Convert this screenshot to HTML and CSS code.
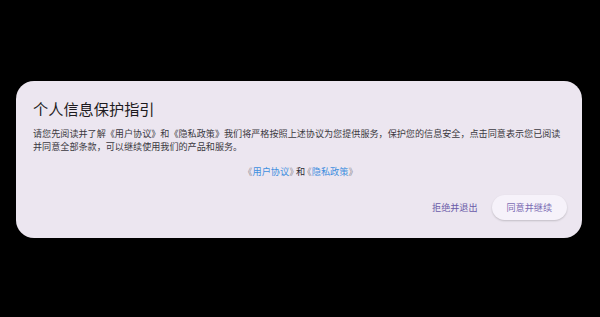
FILE: index.html
```html
<!DOCTYPE html>
<html lang="zh-CN">
<head>
<meta charset="utf-8">
<title>个人信息保护指引</title>
<link rel="stylesheet" href="styles.css">
</head>
<body>
<div class="dialog">
  <h1 class="title">个人信息保护指引</h1>
  <p class="desc">请您先阅读并了解《用户协议》和《隐私政策》我们将严格按照上述协议为您提供服务，保护您的信息安全，点击同意表示您已阅读并同意全部条款，可以继续使用我们的产品和服务。</p>
  <p class="links"><span class="br">《</span><a class="link">用户协议</a><span class="br">》</span> 和 <span class="br">《</span><a class="link">隐私政策</a><span class="br">》</span></p>
  <div class="actions">
    <button class="btn btn-text">拒绝并退出</button>
    <button class="btn btn-tonal">同意并继续</button>
  </div>
</div>
</body>
</html>
```

FILE: styles.css
```css
html, body {
  margin: 0;
  padding: 0;
  background: #000;
}
body {
  width: 600px;
  height: 317px;
  box-sizing: border-box;
  padding: 81px 18px 0 16px;
  font-family: "Noto Sans CJK SC", "Noto Sans", sans-serif;
}
.dialog {
  width: 566px;
  height: 157px;
  box-sizing: border-box;
  background: #ece6f0;
  border-radius: 18px;
  padding: 17px 14px 0 17px;
  display: flex;
  flex-direction: column;
}
.title {
  margin: 0;
  font-size: 15.2px;
  line-height: 20px;
  font-weight: 400;
  color: #1d1b20;
}
.desc {
  margin: 9px 0 0 0;
  font-size: 9.1px;
  line-height: 13.3px;
  color: #3b3940;
}
.links {
  margin: 11px 0 0 0;
  text-align: center;
  font-size: 9.2px;
  line-height: 13.3px;
  color: #2b2930;
  font-feature-settings: "halt";
}
.br {
  color: #8c8a92;
}
.link {
  color: #3f8fdf;
}
.actions {
  margin-top: 17px;
  margin-right: 1px;
  display: flex;
  justify-content: flex-end;
  align-items: center;
}
.btn {
  font-family: "Noto Sans CJK SC", "Noto Sans", sans-serif;
  font-size: 9.1px;
  line-height: 13px;
  height: 25px;
  border: 0;
  border-radius: 12.5px;
  color: #6a5aa8;
  background: transparent;
  padding: 0 15px;
  cursor: pointer;
}
.btn-text {
  padding: 0 14px 0 15px;
}
.btn-tonal {
  background: #f6f2fa;
  box-shadow: 0 1px 2px rgba(0, 0, 0, 0.18);
  color: #7a6cb4;
}
```
